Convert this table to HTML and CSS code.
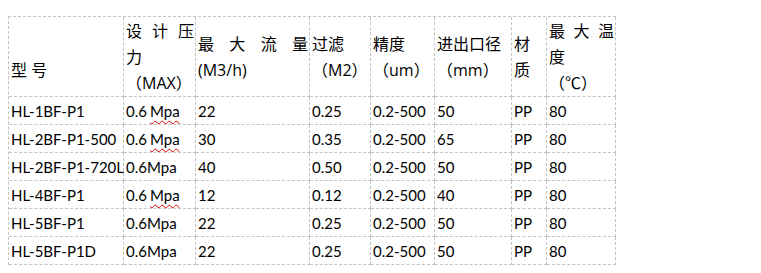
FILE: index.html
```html
<!DOCTYPE html>
<html lang="zh">
<head>
<meta charset="utf-8">
<title>型号参数表</title>
<link rel="stylesheet" href="styles.css">
</head>
<body>
<div class="grid">
  <div class="h c1"><div class="ln">&nbsp;</div><div class="ln">型 号</div></div>
  <div class="h"><div class="ln jl"><span>设</span><span>计</span><span>压</span></div><div class="ln">力</div><div class="ln">（MAX）</div></div>
  <div class="h"><div class="ln jl"><span>最</span><span>大</span><span>流</span><span>量</span></div><div class="ln">(M3/h)</div></div>
  <div class="h"><div class="ln">过滤</div><div class="ln">（M2）</div></div>
  <div class="h"><div class="ln">精度</div><div class="ln">（um）</div></div>
  <div class="h"><div class="ln">进出口径</div><div class="ln">（mm）</div></div>
  <div class="h"><div class="ln">材</div><div class="ln">质</div></div>
  <div class="h"><div class="ln jl"><span>最</span><span>大</span><span>温</span></div><div class="ln">度</div><div class="ln">（℃）</div></div>

  <div class="d">HL-1BF-P1</div><div class="d">0.6 <span class="sp">Mpa</span></div><div class="d">22</div><div class="d">0.25</div><div class="d">0.2-500</div><div class="d">50</div><div class="d">PP</div><div class="d">80</div>
  <div class="d">HL-2BF-P1-500</div><div class="d">0.6 <span class="sp">Mpa</span></div><div class="d">30</div><div class="d">0.35</div><div class="d">0.2-500</div><div class="d">65</div><div class="d">PP</div><div class="d">80</div>
  <div class="d">HL-2BF-P1-720L</div><div class="d">0.6Mpa</div><div class="d">40</div><div class="d">0.50</div><div class="d">0.2-500</div><div class="d">50</div><div class="d">PP</div><div class="d">80</div>
  <div class="d">HL-4BF-P1</div><div class="d">0.6 <span class="sp">Mpa</span></div><div class="d">12</div><div class="d">0.12</div><div class="d">0.2-500</div><div class="d">40</div><div class="d">PP</div><div class="d">80</div>
  <div class="d">HL-5BF-P1</div><div class="d">0.6Mpa</div><div class="d">22</div><div class="d">0.25</div><div class="d">0.2-500</div><div class="d">50</div><div class="d">PP</div><div class="d">80</div>
  <div class="d">HL-5BF-P1D</div><div class="d">0.6Mpa</div><div class="d">22</div><div class="d">0.25</div><div class="d">0.2-500</div><div class="d">50</div><div class="d">PP</div><div class="d">80</div>
</div>
</body>
</html>
```
FILE: styles.css
```css
html, body {
  margin: 0;
  background: #ffffff;
}
body {
  padding: 16px 0 0 8px;
  color: #000000;
}
.grid {
  display: grid;
  grid-template-columns: 115px 72px 114px 61px 64px 77px 35px 69px;
  grid-template-rows: 80px repeat(6, 28px);
  width: max-content;
  border-left: 1px dashed #c3c3c3;
  border-top: 1px dashed #c3c3c3;
}
.h, .d {
  box-sizing: border-box;
  border-right: 1px dashed #c3c3c3;
  border-bottom: 1px dashed #c3c3c3;
  min-width: 0;
}
.h {
  display: flex;
  flex-direction: column;
  justify-content: center;
  padding: 0 1px 0 2px;
  font-family: "Open Sans", "Noto Sans CJK SC", sans-serif;
  font-size: 16px;
  line-height: 26px;
  white-space: nowrap;
}
.jl {
  display: flex;
  justify-content: space-between;
}
.d {
  display: flex;
  align-items: center;
  padding-left: 2px;
  font-family: "Lato", "Liberation Sans", sans-serif;
  font-size: 15px;
  white-space: nowrap;
  overflow: visible;
  position: relative;
}
.sp {
  text-decoration: underline wavy #e00000;
  text-decoration-thickness: 1px;
  text-underline-offset: 3px;
  margin-left: 3px;
}
```
